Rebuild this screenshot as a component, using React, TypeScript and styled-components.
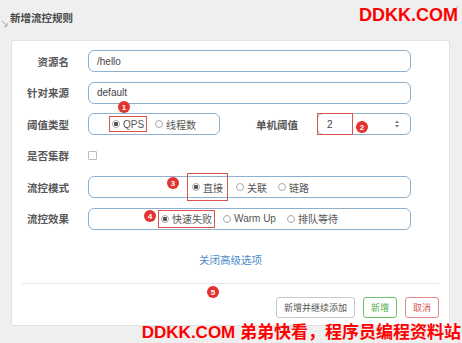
import React from 'react'
import styled, { createGlobalStyle } from 'styled-components'

const GlobalStyle = createGlobalStyle`
  html, body {
    margin: 0;
    padding: 0;
    background: #efefef;
  }
  body {
    font-family: 'Liberation Sans', 'Noto Sans CJK SC', sans-serif;
    color: #555;
  }
`

const Page = styled.div`
  position: relative;
  width: 462px;
  height: 343px;
  overflow: hidden;
  background: #efefef;
`

const Header = styled.div`
  height: 40px;
  display: flex;
  align-items: center;
  padding: 0 0 6px 10px;
  box-sizing: border-box;
`

const Title = styled.h4`
  margin: 0;
  font-size: 10.5px;
  font-weight: bold;
  color: #4a4a4a;
  font-family: 'Noto Sans CJK SC', sans-serif;
`

const Card = styled.div`
  position: relative;
  margin: 0 12px 0 11px;
  background: #fff;
  border: 1px solid #e2e2e2;
  border-radius: 3px;
  padding: 9px 0 9px 0;
  height: 286px;
  box-sizing: border-box;
`

const Form = styled.div`
  display: flex;
  flex-direction: column;
  gap: 9.6px;
  padding-right: 38px;
`

const Row = styled.div`
  display: flex;
  align-items: center;
  height: 22px;
`

const Label = styled.label<{ $width?: number }>`
  flex: ${(p) => (p.$width ? `0 0 ${p.$width}px` : '1')};
  text-align: right;
  font-family: 'Noto Sans CJK SC', sans-serif;
  font-size: 10.5px;
  font-weight: bold;
  color: #585858;
  padding-right: 19px;
`

const Field = styled.div<{ $width?: number; $center?: boolean }>`
  position: relative;
  ${(p) => (p.$width ? `flex: 0 0 ${p.$width}px;` : 'flex: 1;')}
  height: 22px;
  box-sizing: border-box;
  border: 1px solid #8eb0cf;
  border-radius: 6px;
  display: flex;
  align-items: center;
  justify-content: ${(p) => (p.$center ? 'center' : 'flex-start')};
  padding: 0 8px;
  font-size: 10px;
  color: #444;
`

const RadioGroup = styled.div`
  display: flex;
  align-items: center;
  gap: 5px;
`

const RadioItem = styled.span<{ $marked?: boolean; $tall?: number }>`
  display: flex;
  align-items: center;
  gap: 3px;
  height: ${(p) => p.$tall ?? 16}px;
  padding: 0 ${(p) => (p.$tall && p.$tall > 20 ? 4 : 2)}px;
  box-sizing: border-box;
  border: 1px solid ${(p) => (p.$marked ? '#d9534f' : 'transparent')};
  font-size: 10px;
  color: #555;
`

const Dot = styled.span<{ $checked?: boolean }>`
  width: 8px;
  height: 8px;
  box-sizing: border-box;
  border-radius: 50%;
  border: 1px solid #aaa;
  background: ${(p) => (p.$checked ? 'radial-gradient(circle, #555 0 2px, #fff 2.5px)' : '#fff')};
`

const Checkbox = styled.span`
  width: 9px;
  height: 9px;
  box-sizing: border-box;
  border: 1px solid #bbb;
  border-radius: 1px;
`

const NumberMark = styled.span`
  position: absolute;
  left: -1px;
  top: -1px;
  bottom: -1px;
  width: 36px;
  border: 1px solid #d9534f;
  box-sizing: border-box;
`

const NumberValue = styled.span`
  flex: 1;
  padding-left: 1px;
`

const Spinner = styled.svg`
  width: 6px;
  height: 10px;
  margin-right: 2px;
`

const LinkRow = styled.div`
  text-align: center;
  margin-top: 20px;
  height: 16px;
`

const Link = styled.a`
  font-family: 'Noto Sans CJK SC', sans-serif;
  font-size: 10.5px;
  color: #4a8bc9;
  text-decoration: none;
`

const Divider = styled.hr`
  border: 0;
  border-top: 1px solid #e8e8e8;
  margin: 17px 10px 0 10px;
`

const Footer = styled.div`
  display: flex;
  justify-content: flex-end;
  gap: 8px;
  padding: 13px 10px 0 0;
`

const Button = styled.button<{ $tone: 'default' | 'success' | 'danger' }>`
  height: 21px;
  padding: 0 7px;
  background: #fff;
  border-radius: 3px;
  font-family: 'Noto Sans CJK SC', sans-serif;
  font-size: 9px;
  border: 1px solid
    ${(p) => (p.$tone === 'success' ? '#6cc06c' : p.$tone === 'danger' ? '#e3898b' : '#c8c8c8')};
  color: ${(p) => (p.$tone === 'success' ? '#4cae4c' : p.$tone === 'danger' ? '#d9534f' : '#555')};
`

const Badge = styled.span<{ $x: number; $y: number }>`
  position: absolute;
  left: ${(p) => p.$x - 6}px;
  top: ${(p) => p.$y - 6}px;
  width: 12px;
  height: 12px;
  border-radius: 50%;
  background: #e3332f;
  color: #fff;
  font-size: 8px;
  font-weight: bold;
  display: flex;
  align-items: center;
  justify-content: center;
  z-index: 2;
`

const Watermark = styled.div<{ $size: number }>`
  position: absolute;
  color: #ff0000;
  font-weight: bold;
  font-size: ${(p) => p.$size}px;
  font-family: 'Liberation Sans', 'Noto Sans CJK SC', sans-serif;
  white-space: nowrap;
  z-index: 3;
  line-height: 1;
`

const TopMark = styled(Watermark)`
  right: 4px;
  top: 6px;
`

const BottomMark = styled(Watermark)`
  right: 1px;
  bottom: 2px;
`

const Corner = styled.svg`
  position: absolute;
  left: 1px;
  top: 20px;
  width: 8px;
  height: 10px;
`

const Close = styled.svg`
  position: absolute;
  right: 3px;
  top: 5px;
  width: 8px;
  height: 8px;
  z-index: 1;
`

// card origin on page is (12, 41): badge coordinates are relative to it
const badges = [
  { n: 1, x: 112, y: 66 },
  { n: 2, x: 350, y: 86 },
  { n: 3, x: 161, y: 142 },
  { n: 4, x: 138, y: 175 },
  { n: 5, x: 201, y: 251 },
]

const App: React.FC = () => {
  return (
    <Page>
      <GlobalStyle />
      <Corner viewBox="0 0 8 10">
        <path d="M1 1 L6 6 M3 7 L6 6 L6 3" stroke="#999" strokeWidth="0.8" fill="none" />
      </Corner>
      <Close viewBox="0 0 8 8">
        <path d="M1 4 L3 6.5 L7 1" stroke="#b5b5b5" strokeWidth="1" fill="none" />
      </Close>
      <TopMark $size={18}>DDKK.COM</TopMark>
      <Header>
        <Title>新增流控规则</Title>
      </Header>
      <Card>
        <Form>
          <Row>
            <Label $width={57}>资源名</Label>
            <Field>/hello</Field>
          </Row>
          <Row>
            <Label $width={57}>针对来源</Label>
            <Field>default</Field>
          </Row>
          <Row>
            <Label $width={57}>阈值类型</Label>
            <Field $width={132} $center>
              <RadioGroup>
                <RadioItem $marked>
                  <Dot $checked />
                  QPS
                </RadioItem>
                <RadioItem>
                  <Dot />
                  线程数
                </RadioItem>
              </RadioGroup>
            </Field>
            <Label>单机阈值</Label>
            <Field $width={94}>
              <NumberMark />
              <NumberValue>2</NumberValue>
              <Spinner viewBox="0 0 6 10">
                <path d="M3 1.5 L5 4 H1 Z M3 8.5 L5 6 H1 Z" fill="#777" />
              </Spinner>
            </Field>
          </Row>
          <Row>
            <Label $width={57}>是否集群</Label>
            <Checkbox />
          </Row>
          <Row>
            <Label $width={57}>流控模式</Label>
            <Field $center>
              <RadioGroup>
                <RadioItem $marked $tall={28}>
                  <Dot $checked />
                  直接
                </RadioItem>
                <RadioItem>
                  <Dot />
                  关联
                </RadioItem>
                <RadioItem>
                  <Dot />
                  链路
                </RadioItem>
              </RadioGroup>
            </Field>
          </Row>
          <Row>
            <Label $width={57}>流控效果</Label>
            <Field $center>
              <RadioGroup>
                <RadioItem $marked $tall={18}>
                  <Dot $checked />
                  快速失败
                </RadioItem>
                <RadioItem>
                  <Dot />
                  Warm Up
                </RadioItem>
                <RadioItem>
                  <Dot />
                  排队等待
                </RadioItem>
              </RadioGroup>
            </Field>
          </Row>
        </Form>
        <LinkRow>
          <Link>关闭高级选项</Link>
        </LinkRow>
        <Divider />
        <Footer>
          <Button $tone="default">新增并继续添加</Button>
          <Button $tone="success">新增</Button>
          <Button $tone="danger">取消</Button>
        </Footer>
        {badges.map((b) => (
          <Badge key={b.n} $x={b.x} $y={b.y}>
            {b.n}
          </Badge>
        ))}
      </Card>
      <BottomMark $size={17}>DDKK.COM 弟弟快看，程序员编程资料站</BottomMark>
    </Page>
  )
}

export default App
